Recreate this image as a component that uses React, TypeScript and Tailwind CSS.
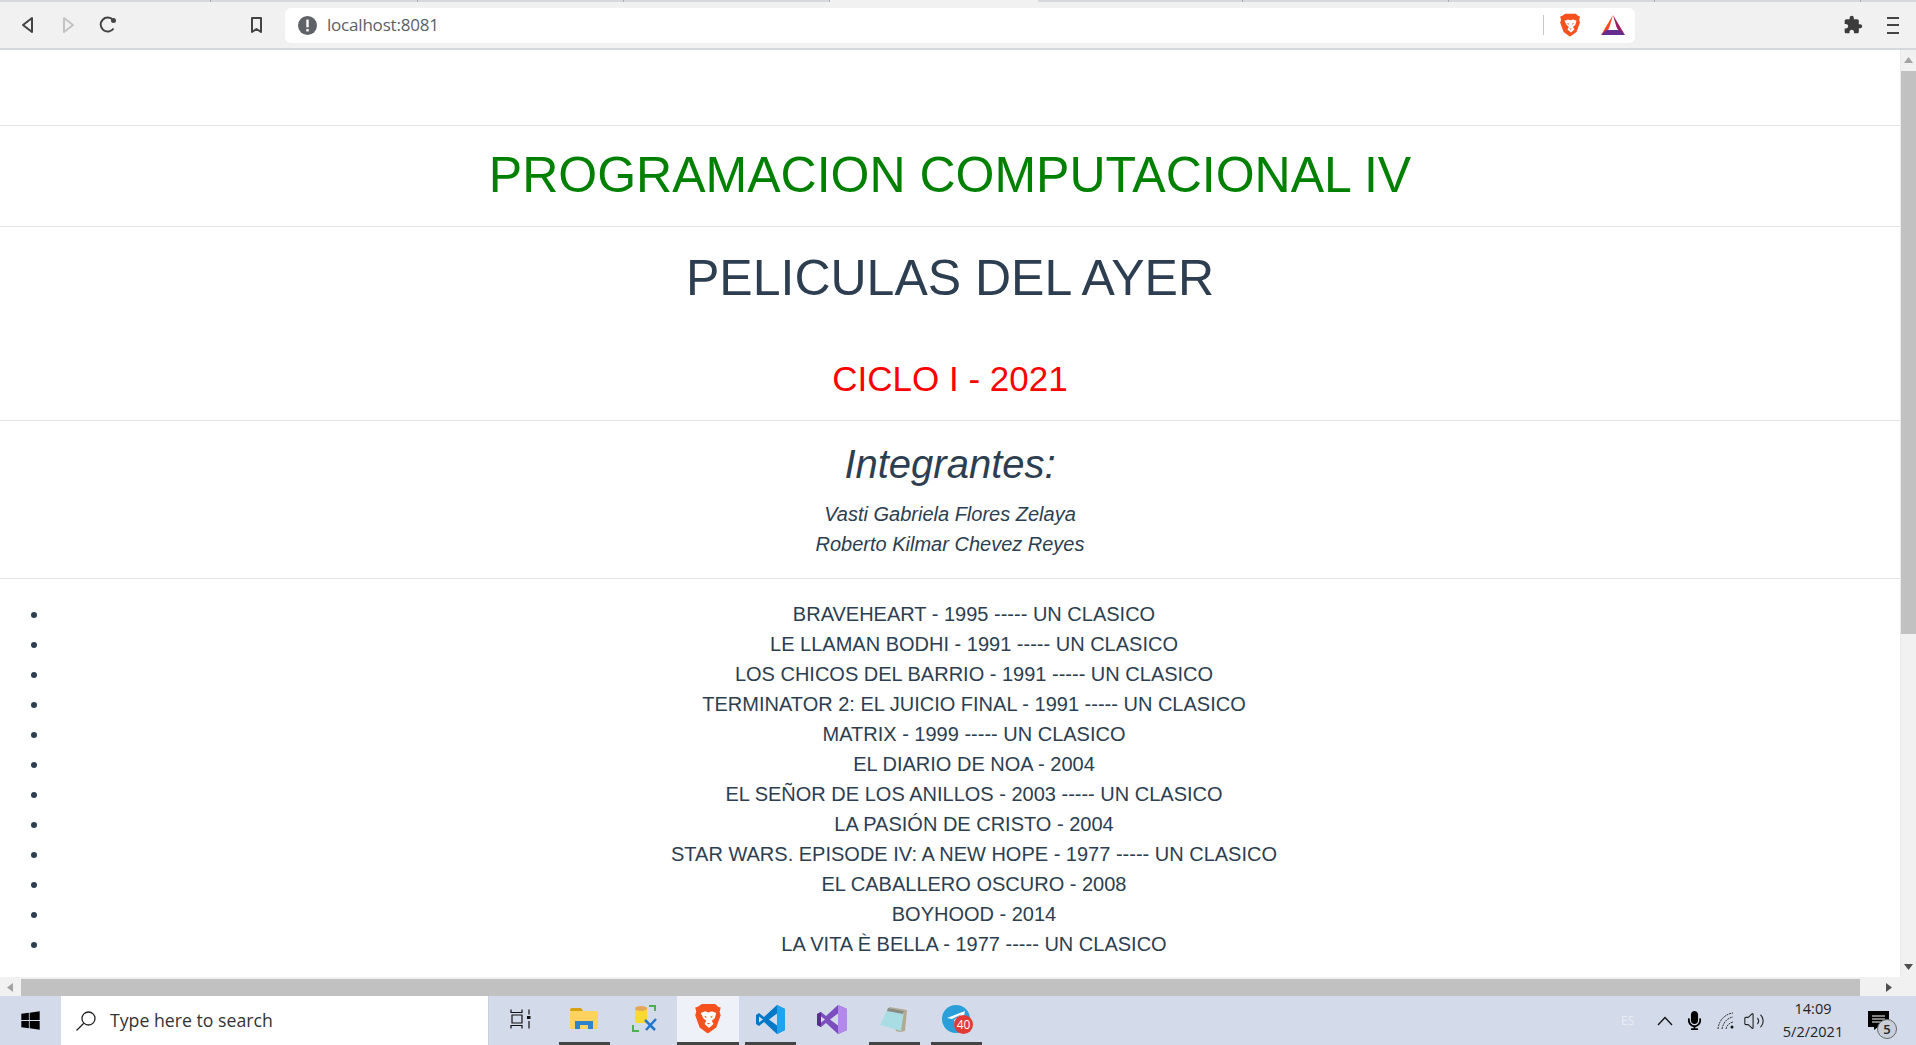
import { FaWindows, FaMicrophone } from "react-icons/fa";
import { Volume2 } from "lucide-react";

const movies = [
  "BRAVEHEART - 1995 ----- UN CLASICO",
  "LE LLAMAN BODHI - 1991 ----- UN CLASICO",
  "LOS CHICOS DEL BARRIO - 1991 ----- UN CLASICO",
  "TERMINATOR 2: EL JUICIO FINAL - 1991 ----- UN CLASICO",
  "MATRIX - 1999 ----- UN CLASICO",
  "EL DIARIO DE NOA - 2004",
  "EL SEÑOR DE LOS ANILLOS - 2003 ----- UN CLASICO",
  "LA PASIÓN DE CRISTO - 2004",
  "STAR WARS. EPISODE IV: A NEW HOPE - 1977 ----- UN CLASICO",
  "EL CABALLERO OSCURO - 2008",
  "BOYHOOD - 2014",
  "LA VITA È BELLA - 1977 ----- UN CLASICO",
];

function BraveLogo({ size }: { size: number }) {
  return (
    <svg width={size} height={size * 1.15} viewBox="0 0 24 28">
      <path d="M6 1h12l3 2.500 2 .5-1 4 1 3-4 11-7 5-1 .2-7-5.200-4-11 1-3-1-4 2-.5z" fill="#f4511e" />
      <path d="M5 9l4-1.500 3 1 3-1 4 1.500-1.500 5-2.500 2 1.500 3-4 3.500-4-3.500 1.500-3-2.500-2z" fill="#fff" />
      <path d="M8 11.500l2.500 1-1 1zM16 11.500l-2.500 1 1 1zM10.500 18h3l-1.500 1.500z" fill="#f4511e" />
    </svg>
  );
}

function BatLogo() {
  return (
    <svg width="24" height="20" viewBox="0 0 24 20">
      <polygon points="12,0 0,20 8,14" fill="#ff4724" />
      <polygon points="12,0 24,20 16,14" fill="#9e1f63" />
      <polygon points="0,20 24,20 19,15 5,15" fill="#662d91" />
      <polygon points="12,7 7,15 17,15" fill="#fff" />
    </svg>
  );
}

function TaskButton({ active, line, children }: { active?: boolean; line?: boolean; children: React.ReactNode }) {
  return (
    <div className={`w-[62px] h-full flex flex-col items-center ${active ? "bg-[#eef1f8]" : ""}`}>
      <div className="flex-1 flex items-center justify-center">{children}</div>
      <div className={`h-[3px] ${active ? "w-full bg-[#444]" : line ? "w-[51px] bg-[#444]" : "w-[51px]"}`} />
    </div>
  );
}

const tabSegments = [211, 207, 206, 206];
const tabSegmentsRight = [205, 206, 206, 206];

export default function App() {
  return (
    <div className="w-[1916px] h-[1045px] flex flex-col overflow-hidden bg-white font-['Liberation_Sans',Arial,sans-serif] text-[#2c3e50]">
      {/* Browser tab edge */}
      <div className="h-[2px] flex shrink-0 bg-[#d5d9df]">
        {tabSegments.map((w, i) => (
          <div key={i} className="h-full border-r border-[#a9adb3]" style={{ width: w }} />
        ))}
        <div className="w-[208px] bg-[#f1f1f2]" />
        {tabSegmentsRight.map((w, i) => (
          <div key={i} className="h-full border-r border-[#a9adb3]" style={{ width: w }} />
        ))}
      </div>

      {/* Browser toolbar */}
      <div className="h-[48px] shrink-0 bg-[#f1f1f2] border-b-2 border-[#d5d9de] flex items-center">
        <div className="w-[285px] h-full flex items-center shrink-0 pl-[21px]">
          <svg width="14" height="18" viewBox="0 0 14 18" fill="none" stroke="#444" strokeWidth="2" strokeLinejoin="round">
            <polygon points="11,2 11,16 2,9" />
          </svg>
          <svg className="ml-[26px]" width="14" height="18" viewBox="0 0 14 18" fill="none" stroke="#c4c4c4" strokeWidth="2" strokeLinejoin="round">
            <polygon points="3,2 3,16 12,9" />
          </svg>
          <svg className="ml-[24px]" width="18" height="18" viewBox="0 0 18 18" fill="none">
            <path d="M14.500 12.500A7 7 0 1 1 14 4" stroke="#444" strokeWidth="2" fill="none" />
            <circle cx="14.500" cy="4.500" r="2.500" fill="#444" />
          </svg>
          <svg className="ml-[133px]" width="13" height="18" viewBox="0 0 13 18" fill="none" stroke="#444" strokeWidth="2" strokeLinejoin="round">
            <path d="M2 2h9v14l-4.500-3L2 16z" />
          </svg>
        </div>
        <div className="w-[1350px] h-[35px] bg-white rounded-[6px] flex items-center shrink-0">
          <svg className="ml-[13px]" width="19" height="19" viewBox="0 0 16 16">
            <circle cx="8" cy="8" r="8" fill="#5f6368" />
            <rect x="7" y="3" width="2" height="6.500" fill="#fff" />
            <rect x="7" y="11" width="2" height="2" fill="#fff" />
          </svg>
          <span className="ml-[10px] text-[17px] text-[#5a5f66] font-['Open_Sans',sans-serif] tracking-[-0.2px]">localhost:8081</span>
          <div className="ml-auto w-px h-[20px] bg-[#c8c8c8]" />
          <div className="ml-[16px]"><BraveLogo size={21} /></div>
          <div className="ml-[20px] mr-[10px]"><BatLogo /></div>
        </div>
        <svg className="ml-[208px]" width="20" height="20" viewBox="0 0 24 24">
          <path d="M20.500 11H19V7c0-1.100-.9-2-2-2h-4V3.500C13 2.120 11.880 1 10.500 1S8 2.120 8 3.500V5H4c-1.100 0-1.990.9-1.990 2v3.800H3.500c1.490 0 2.700 1.210 2.700 2.700s-1.210 2.700-2.700 2.700H2V20c0 1.100.9 2 2 2h3.800v-1.500c0-1.490 1.210-2.700 2.700-2.700 1.490 0 2.700 1.210 2.700 2.700V22H17c1.100 0 2-.9 2-2v-4h1.500c1.380 0 2.500-1.120 2.500-2.500S21.880 11 20.500 11z" fill="#3c3c3c" />
        </svg>
        <div className="ml-[24px] w-[12px] flex flex-col gap-[5.500px]">
          <div className="h-[2px] bg-[#444]" />
          <div className="h-[2px] bg-[#444]" />
          <div className="h-[2px] bg-[#444]" />
        </div>
      </div>

      {/* Page with vertical scrollbar */}
      <div className="flex-1 min-h-0 flex">
        <main className="w-[1900px] h-full overflow-hidden pt-[75px] text-center">
          <hr className="border-t-1 mb-[1px] border-[#e4e4e4]" />
          <h1 className="h-[99px] pb-[2px] flex items-center justify-center text-[50px] text-[#008000]">PROGRAMACION COMPUTACIONAL IV</h1>
          <hr className="border-t-1 mb-[1px] border-[#e4e4e4]" />
          <h2 className="h-[100px] flex items-center justify-center text-[50px]">PELICULAS DEL AYER</h2>
          <h3 className="h-[92px] pt-[10px] flex items-center justify-center text-[35px] text-[#ff0000]">CICLO I - 2021</h3>
          <hr className="border-t-1 mb-[1px] border-[#e4e4e4]" />
          <h3 className="h-[84px] flex items-center justify-center text-[40px] italic">Integrantes:</h3>
          <p className="h-[30px] leading-[30px] text-[20px] italic -mt-[7px]">Vasti Gabriela Flores Zelaya</p>
          <p className="h-[30px] leading-[30px] text-[20px] italic">Roberto Kilmar Chevez Reyes</p>
          <div className="h-[19px]" />
          <hr className="border-t-1 border-[#e4e4e4]" />
          <ul className="w-[1898px] mt-[20px] pl-[50px] list-disc text-[20px] leading-[30px]">
            {movies.map((m) => (
              <li key={m}>{m}</li>
            ))}
          </ul>
        </main>
        <div className="w-[16px] h-full bg-[#f1f1f1] flex flex-col items-center border-l border-[#eaeaea]">
          <svg className="mt-[7px]" width="9" height="6" viewBox="0 0 9 6"><polygon points="4.500,0 9,6 0,6" fill="#a3a3a3" /></svg>
          <div className="mt-[8px] w-full h-[563px] bg-[#c1c1c1]" />
          <svg className="mt-auto mb-[7px]" width="9" height="6" viewBox="0 0 9 6"><polygon points="4.500,6 9,0 0,0" fill="#505050" /></svg>
        </div>
      </div>

      {/* Horizontal scrollbar */}
      <div className="h-[19px] shrink-0 bg-[#f1f1f1] flex items-center border-t-2 border-[#f1f1f1]">
        <svg className="ml-[7px]" width="6" height="9" viewBox="0 0 6 9"><polygon points="0,4.500 6,0 6,9" fill="#a3a3a3" /></svg>
        <div className="ml-[8px] w-[1839px] h-full bg-[#c1c1c1]" />
        <svg className="ml-[26px]" width="6" height="9" viewBox="0 0 6 9"><polygon points="6,4.500 0,0 0,9" fill="#505050" /></svg>
      </div>

      {/* Windows taskbar */}
      <footer className="h-[49px] shrink-0 bg-[#d3dbea] flex items-center font-['Open_Sans',sans-serif] text-[#1c1c1c]">
        <div className="w-[61px] h-full flex items-center justify-center">
          <FaWindows size={21} className="text-black" />
        </div>
        <div className="w-[428px] h-full bg-white flex items-center pl-[14px] border-r border-[#c9d0de]">
          <svg width="22" height="22" viewBox="0 0 22 22" fill="none" stroke="#222" strokeWidth="1.300">
            <circle cx="13.500" cy="8.500" r="6.500" />
            <path d="M8.800 13.200L1.500 20.500" />
          </svg>
          <span className="ml-[13px] text-[17.700px] text-[#333]">Type here to search</span>
        </div>
        <div className="w-[2px]" />
        <TaskButton>
          <svg className="-ml-[3px]" width="21" height="20" viewBox="0 0 21 20" fill="none" stroke="#111" strokeWidth="1.200">
            <path d="M1 0.500v3h11v-3M2 6h10v8H2zM1 19.500v-3h11v3" />
            <path d="M19 0.500v5M19 12v7.500" />
            <rect x="17" y="7" width="3.500" height="3" fill="#111" stroke="none" />
          </svg>
        </TaskButton>
        <TaskButton line>
          <svg width="28" height="24" viewBox="0 0 28 24">
            <path d="M0 3a2 2 0 0 1 2-2h9l2 3h-13z" fill="#d9a015" />
            <rect x="0" y="4" width="28" height="18" rx="1.500" fill="#fdd25f" />
            <path d="M5 22v-8h18v8h-5v-4h-8v4z" fill="#2e83cf" />
          </svg>
        </TaskButton>
        <TaskButton>
          <svg width="28" height="28" viewBox="0 0 28 28" fill="none">
            <rect x="3" y="2" width="12" height="16" rx="1" fill="#fdd835" />
            <ellipse cx="9" cy="3.500" rx="6" ry="2.500" fill="#e6a65a" />
            <path d="M17 1h6v5M1 20v6h6" stroke="#4caf50" strokeWidth="2" />
            <path d="M13 15l10 10M24 14L14 25" stroke="#2277cc" strokeWidth="2.500" />
          </svg>
        </TaskButton>
        <TaskButton active>
          <BraveLogo size={27} />
        </TaskButton>
        <TaskButton line>
          <svg width="31" height="31" viewBox="0 0 31 31">
            <path d="M22 1l8 4v21l-8 4-13-12-5 4-3-2v-9l3-2 5 4z" fill="#0078c8" />
            <path d="M22 1l8 4v21l-8 4z" fill="#1ea3ee" />
            <path d="M22 9.500l-8 6 8 6z" fill="#d3dbea" />
            <path d="M4 12.500l4 3-4 3z" fill="#d3dbea" />
          </svg>
        </TaskButton>
        <TaskButton>
          <svg width="30" height="31" viewBox="0 0 30 31">
            <path d="M21 1l9 4v21l-9 4-12-11-5 4-4-2V10l4-2 5 4z" fill="#7c4dbe" />
            <path d="M21 1l9 4v21l-9 4z" fill="#b388eb" />
            <path d="M21 9.500l-8 6 8 6z" fill="#d3dbea" />
            <path d="M0 10l4-2v15l-4-2z" fill="#5c2d91" />
            <path d="M4 12.500l4 3-4 3z" fill="#d3dbea" />
          </svg>
        </TaskButton>
        <TaskButton line>
          <svg width="28" height="27" viewBox="0 0 28 27">
            <path d="M9 1l18 3-2 21-5 1-4-1z" fill="#b3a98f" />
            <path d="M8 2l16 3-3 20L0 19z" fill="#a7dde3" />
            <path d="M8 2l16 3-1 3L7 5z" fill="#8a8a80" />
          </svg>
        </TaskButton>
        <TaskButton line>
          <div className="relative w-[28px] h-[28px] rounded-full bg-[#2a9ed8] flex items-center justify-center">
            <svg width="18" height="16" viewBox="0 0 18 16">
              <path d="M0 7L18 0l-3 15-5-4-2 3-1-5 8-6-10 5z" fill="#fff" />
            </svg>
            <span className="absolute left-[12px] top-[10px] w-[19px] h-[19px] rounded-full bg-[#e53935] text-white text-[12px] leading-[19px] text-center">40</span>
          </div>
        </TaskButton>

        {/* Tray */}
        <span className="ml-[634px] w-[24px] text-[12px] text-[#e8edf5]">ES</span>
        <svg className="ml-[12px]" width="16" height="10" viewBox="0 0 16 10" fill="none" stroke="#111" strokeWidth="1.300">
          <path d="M1 9l7-7.500L15 9" />
        </svg>
        <FaMicrophone className="ml-[12px] text-black" size={19} />
        <svg className="ml-[13px]" width="18" height="18" viewBox="0 0 18 18" fill="none" stroke="#333" strokeWidth="1">
          <path d="M1 17C2 8 8 2 16 1M5 17C6 11 10 6 16 5M9 17c.5-3 3-6 7-7" strokeDasharray="2 0.800" />
          <circle cx="15" cy="15" r="1.500" fill="#111" stroke="none" />
        </svg>
        <Volume2 className="ml-[8px] text-[#222]" size={22} strokeWidth={1.200} />
        <div className="ml-[15px] w-[66px] text-center text-[14.500px] leading-[23px] text-[#222] -mt-[1px]">
          <div>14:09</div>
          <div>5/2/2021</div>
        </div>
        <div className="relative ml-[22px] flex flex-col">
          <svg width="21" height="19" viewBox="0 0 21 19">
            <path d="M0 0h21v16H10l-4 3v-3H0z" fill="#000" />
            <path d="M4 5h13M4 8h13M4 11h13" stroke="#fff" strokeWidth="1" />
          </svg>
          <span className="absolute left-[9px] top-[8px] w-[20px] h-[20px] rounded-full bg-[#c9cfda] border border-[#666] text-[13px] leading-[18px] text-center font-semibold text-[#222]">5</span>
        </div>
      </footer>
    </div>
  );
}
